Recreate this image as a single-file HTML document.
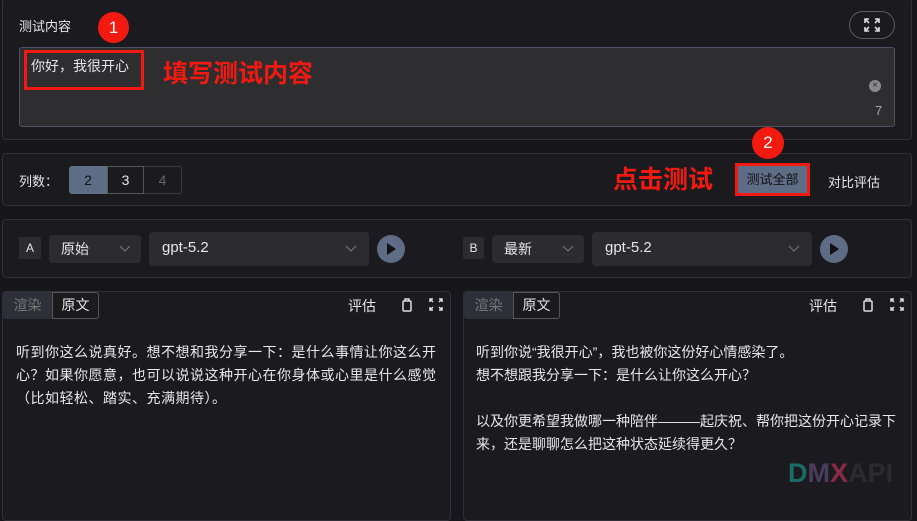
<!DOCTYPE html>
<html><head><meta charset="utf-8"><style>
*{box-sizing:border-box;margin:0;padding:0}
body{width:917px;height:507px;background:#17171b;font-family:"Liberation Sans","Noto Sans CJK SC",sans-serif;color:#e6e6e6;position:relative;overflow:hidden;font-size:13px}
.a{position:absolute}
.panel{position:absolute;border:1px solid #303036;border-radius:4px;background:#1b1b1f}
.sel{position:absolute;background:#2c2c30;border-radius:4px;font-size:14px;color:#e6e6e6}
.chev{position:absolute;top:50%;margin-top:-4px}
.red{color:#f21a10;font-weight:bold;font-size:25px;line-height:30px}
.txt{font-size:14px;line-height:23px;color:#e8e8e8;white-space:nowrap}
</style></head><body>
<!-- panel 1 -->
<div class="panel" style="left:2px;top:-2px;width:910px;height:142px"></div>
<div class="a" style="left:19px;top:16px;font-size:13px">测试内容</div>
<div class="a" style="left:98px;top:12px;width:31px;height:31px;border-radius:50%;background:#f21a10;color:#fff;font-size:17px;text-align:center;line-height:31px">1</div>
<div class="a" style="left:849px;top:11px;width:46px;height:28px;border:1px solid #5a5a60;border-radius:14px"></div>
<svg class="a" style="left:864px;top:18px" width="16" height="14" viewBox="0 0 16 14" fill="none" stroke="#ddd" stroke-width="1.6"><path d="M1 5V1h4M1 1l4 4M15 5V1h-4M15 1l-4 4M1 9v4h4M1 13l4-4M15 9v4h-4M15 13l-4-4"/></svg>
<div class="a" style="left:19px;top:47px;width:876px;height:80px;background:#2e2e31;border:1px solid #4b5263;border-radius:3px"></div>
<div class="a" style="left:31px;top:56px;font-size:14px">你好，我很开心</div>
<div class="a" style="left:24px;top:50px;width:120px;height:40px;border:3px solid #f21a10"></div>
<div class="a red" style="left:163px;top:59px">填写测试内容</div>
<div class="a" style="left:869px;top:80px;width:12px;height:12px;border-radius:50%;background:#8a8a8e;color:#2e2e31;font-size:10px;line-height:12px;text-align:center">×</div>
<div class="a" style="left:875px;top:103px;color:#9aa;font-size:13px">7</div>
<!-- panel 2 -->
<div class="panel" style="left:2px;top:153px;width:910px;height:53px"></div>
<div class="a" style="left:19px;top:171px;font-size:13px">列数：</div>
<div class="a" style="left:69px;top:166px;width:113px;height:28px;border:1px solid #3a3a40;border-radius:3px"></div>
<div class="a" style="left:69px;top:166px;width:38px;height:28px;background:#5f6c85;border-radius:3px 0 0 3px;text-align:center;line-height:28px;font-size:14px;color:#111">2</div>
<div class="a" style="left:107px;top:166px;width:37px;height:28px;border:1px solid #555;text-align:center;line-height:26px;font-size:14px">3</div>
<div class="a" style="left:144px;top:166px;width:37px;height:28px;text-align:center;line-height:28px;font-size:14px;color:#666">4</div>
<div class="a red" style="left:613px;top:165px">点击测试</div>
<div class="a" style="left:735px;top:163px;width:75px;height:33px;background:#5f6c85;border:3px solid #f21a10;text-align:center;line-height:27px;font-size:13px;color:#111">测试全部</div>
<div class="a" style="left:828px;top:172px;font-size:13px">对比评估</div>
<div class="a" style="left:752px;top:127px;width:32px;height:32px;border-radius:50%;background:#f21a10;color:#fff;font-size:17px;text-align:center;line-height:32px">2</div>
<!-- panel 3 -->
<div class="panel" style="left:2px;top:219px;width:910px;height:59px"></div>
<div class="a" style="left:19px;top:237px;width:22px;height:22px;background:#2c2c30;border-radius:2px;text-align:center;line-height:22px;font-size:12px">A</div>
<div class="sel" style="left:49px;top:235px;width:92px;height:28px;padding:4px 12px">原始<svg class="chev" style="right:10px" width="12" height="8"><path d="M1 1l5 5 5-5" stroke="#777" fill="none"/></svg></div>
<div class="sel" style="left:149px;top:232px;width:220px;height:34px;padding:7px 13px;font-size:15px">gpt-5.2<svg class="chev" style="right:12px" width="12" height="8"><path d="M1 1l5 5 5-5" stroke="#777" fill="none"/></svg></div>
<div class="a" style="left:377px;top:235px;width:28px;height:28px;border-radius:50%;background:#5f6c85"></div>
<svg class="a" style="left:386px;top:243px" width="10" height="12"><path d="M1 0l9 6-9 6z" fill="#111"/></svg>
<div class="a" style="left:463px;top:237px;width:21px;height:22px;background:#2c2c30;border-radius:2px;text-align:center;line-height:22px;font-size:12px">B</div>
<div class="sel" style="left:492px;top:235px;width:92px;height:28px;padding:4px 12px">最新<svg class="chev" style="right:10px" width="12" height="8"><path d="M1 1l5 5 5-5" stroke="#777" fill="none"/></svg></div>
<div class="sel" style="left:592px;top:232px;width:220px;height:34px;padding:7px 13px;font-size:15px">gpt-5.2<svg class="chev" style="right:12px" width="12" height="8"><path d="M1 1l5 5 5-5" stroke="#777" fill="none"/></svg></div>
<div class="a" style="left:820px;top:235px;width:28px;height:28px;border-radius:50%;background:#5f6c85"></div>
<svg class="a" style="left:829px;top:243px" width="10" height="12"><path d="M1 0l9 6-9 6z" fill="#111"/></svg>
<!-- cards -->
<div class="panel" style="left:2px;top:291px;width:449px;height:230px"></div>
<div class="a" style="left:3px;top:292px;width:49px;height:27px;background:#2d3038;border-radius:3px 0 0 3px;text-align:center;line-height:27px;color:#777;font-size:14px">渲染</div>
<div class="a" style="left:52px;top:292px;width:47px;height:27px;border:1px solid #555;border-radius:0 3px 3px 0;text-align:center;line-height:25px;font-size:14px">原文</div>
<div class="a" style="left:348px;top:296px;font-size:14px">评估</div>
<svg class="a" style="left:402px;top:298px" width="10" height="14" fill="none" stroke="#ddd" stroke-width="1.5"><rect x="1" y="3" width="8" height="10" rx="1"/><path d="M3 3V1h4v2"/></svg>
<svg class="a" style="left:429px;top:298px" width="14" height="13" fill="none" stroke="#ddd" stroke-width="1.5"><path d="M1 4V1h3M1 1l3 3M13 4V1h-3M13 1l-3 3M1 9v3h3M1 12l3-3M13 9v3h-3M13 12l-3-3"/></svg>
<div class="a txt" style="left:16px;top:341px;letter-spacing:0.5px">听到你这么说真好。想不想和我分享一下：是什么事情让你这么开<br>心？如果你愿意，也可以说说这种开心在你身体或心里是什么感觉<br>（比如轻松、踏实、充满期待）。</div>
<div class="panel" style="left:463px;top:291px;width:449px;height:230px"></div>
<div class="a" style="left:464px;top:292px;width:49px;height:27px;background:#2d3038;border-radius:3px 0 0 3px;text-align:center;line-height:27px;color:#777;font-size:14px">渲染</div>
<div class="a" style="left:513px;top:292px;width:47px;height:27px;border:1px solid #555;border-radius:0 3px 3px 0;text-align:center;line-height:25px;font-size:14px">原文</div>
<div class="a" style="left:809px;top:296px;font-size:14px">评估</div>
<svg class="a" style="left:863px;top:298px" width="10" height="14" fill="none" stroke="#ddd" stroke-width="1.5"><rect x="1" y="3" width="8" height="10" rx="1"/><path d="M3 3V1h4v2"/></svg>
<svg class="a" style="left:890px;top:298px" width="14" height="13" fill="none" stroke="#ddd" stroke-width="1.5"><path d="M1 4V1h3M1 1l3 3M13 4V1h-3M13 1l-3 3M1 9v3h3M1 12l3-3M13 9v3h-3M13 12l-3-3"/></svg>
<div class="a txt" style="left:476px;top:341px">听到你说“我很开心”，我也被你这份好心情感染了。<br>想不想跟我分享一下：是什么让你这么开心？<br><br>以及你更希望我做哪一种陪伴———起庆祝、帮你把这份开心记录下<br>来，还是聊聊怎么把这种状态延续得更久？</div>
<div class="a" style="left:788px;top:458px;font-size:27px;font-weight:bold"><span style="color:#1b6b66">D</span><span style="color:#4a3c5e">M</span><span style="color:#8c2a44">X</span><span style="color:#2c2c30">API</span></div>
</body></html>
